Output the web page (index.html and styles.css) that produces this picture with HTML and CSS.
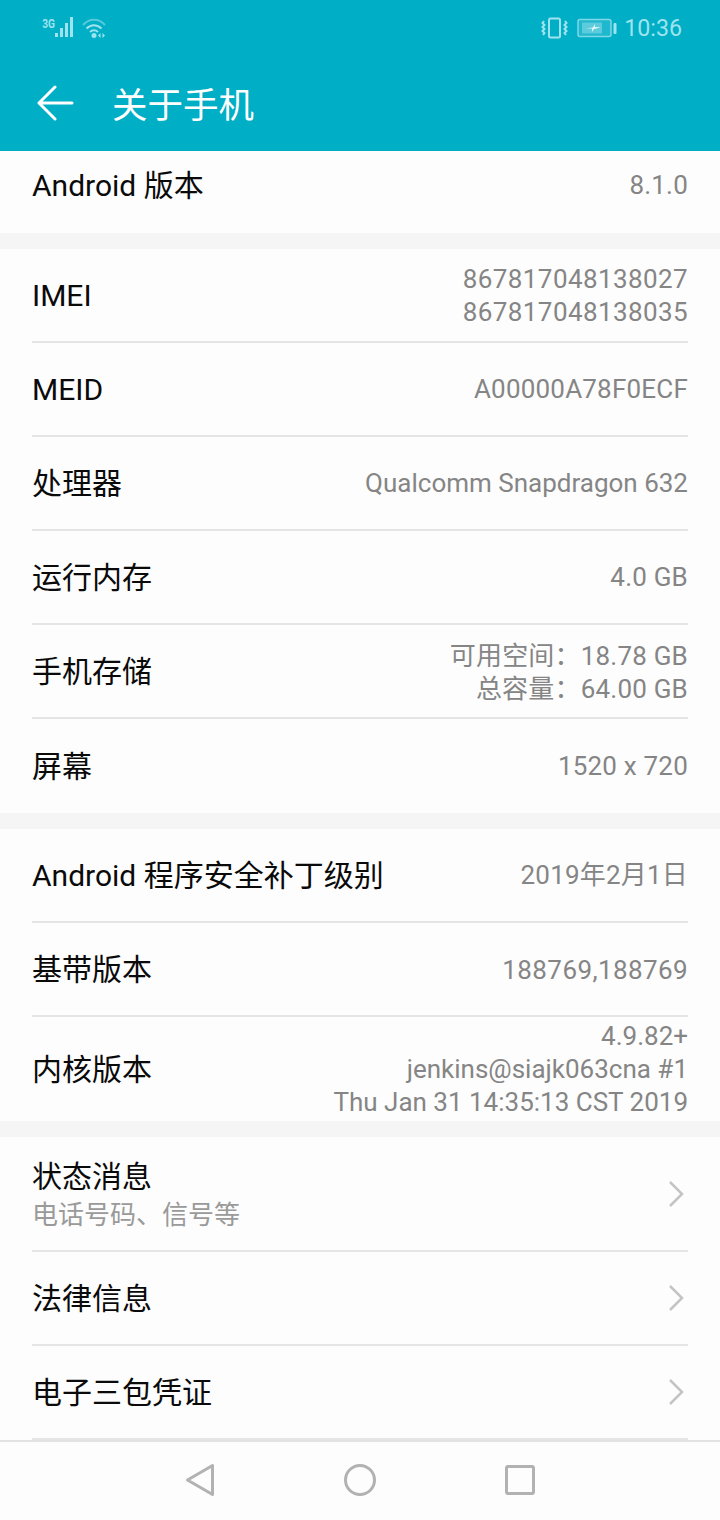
FILE: index.html
```html
<!DOCTYPE html>
<html lang="zh">
<head>
<meta charset="utf-8">
<title>关于手机</title>
<link rel="stylesheet" href="styles.css">
</head>
<body>
<div class="phone">
  <header class="appbar">
    <div class="status">
      <div class="status-left">
        <span class="net">3G</span>
        <svg class="signal" width="22" height="22" viewBox="0 0 22 22"><g fill="#9fe3ee"><rect x="1" y="16" width="3" height="4"/><rect x="6" y="11" width="3" height="9"/><rect x="11" y="6" width="3" height="14"/><rect x="16" y="0" width="3" height="20"/></g></svg>
        <svg class="wifi" width="26" height="22" viewBox="0 0 26 22"><g fill="none" stroke="#9fe3ee" stroke-width="2"><path d="M1 8C7 1 17 1 23 8" opacity=".55"/><path d="M4.500 11.500C9 7 15 7 19.500 11.500"/><path d="M8 15C10.500 12.800 13.500 12.800 16 15"/></g><circle cx="12" cy="18.500" r="2.500" fill="#9fe3ee"/><path d="M18.500 16v5L16 18.500zM20.500 16v5l2.500-2.500z" fill="#9fe3ee"/></svg>
      </div>
      <div class="status-right">
        <svg class="vibrate" width="27" height="22" viewBox="0 0 27 22"><rect x="8" y="1.500" width="11" height="19" rx="1.500" fill="none" stroke="#9fe3ee" stroke-width="2"/><path d="M3 4L1.500 6 3.500 8 1.500 10 3.500 12 1.500 14 3.500 16 2 18M24 4l1.500 2-2 2 2 2-2 2 2 2-2 2 1.500 2" fill="none" stroke="#9fe3ee" stroke-width="2"/></svg>
        <svg class="battery" width="40" height="20" viewBox="0 0 40 20"><rect x="1" y="1.500" width="33" height="17" rx="2" fill="#1fb8ce" stroke="#7fd8e6" stroke-width="1.500"/><rect x="5" y="4.500" width="20" height="11" fill="#5cccdc"/><path d="M9 10.500l7-1 2-3.500 0 3 6 .5-7 1.500-2 3 0-3.500z" fill="#e2f7fa"/><rect x="36.500" y="5" width="3" height="11" rx="1" fill="#9fe3ee"/></svg>
        <span class="clock">10:36</span>
      </div>
    </div>
    <div class="titlebar">
      <svg class="back" width="40" height="36" viewBox="0 0 40 36"><path d="M36 18H3M19 2L3 18l16 16" fill="none" stroke="#fff" stroke-width="3" stroke-linecap="round" stroke-linejoin="round"/></svg>
      <h1>关于手机</h1>
    </div>
  </header>
  <main class="content">
    <section class="group first">
      <div class="row top"><span class="label">Android 版本</span><span class="value">8.1.0</span></div>
    </section>
    <section class="group">
      <div class="row"><span class="label">IMEI</span><span class="value digits two">867817048138027<br>867817048138035</span></div>
      <div class="row"><span class="label">MEID</span><span class="value">A00000A78F0ECF</span></div>
      <div class="row"><span class="label">处理器</span><span class="value plain">Qualcomm Snapdragon 632</span></div>
      <div class="row"><span class="label">运行内存</span><span class="value">4.0 GB</span></div>
      <div class="row"><span class="label">手机存储</span><span class="value store">可用空间：18.78 GB<br>总容量：64.00 GB</span></div>
      <div class="row last"><span class="label">屏幕</span><span class="value">1520 x 720</span></div>
    </section>
    <section class="group">
      <div class="row"><span class="label">Android 程序安全补丁级别</span><span class="value">2019年2月1日</span></div>
      <div class="row"><span class="label">基带版本</span><span class="value digits two">188769,188769</span></div>
      <div class="row last tall"><span class="label">内核版本</span><span class="value plain">4.9.82+<br>jenkins@siajk063cna #1<br>Thu Jan 31 14:35:13 CST 2019</span></div>
    </section>
    <section class="group">
      <div class="row link big"><div class="stack"><span class="label">状态消息</span><span class="sub">电话号码、信号等</span></div><svg class="chev" width="18" height="28" viewBox="0 0 18 28"><path d="M3 2l12 12L3 26" fill="none" stroke="#c4c4c4" stroke-width="2.500"/></svg></div>
      <div class="row link"><span class="label">法律信息</span><svg class="chev" width="18" height="28" viewBox="0 0 18 28"><path d="M3 2l12 12L3 26" fill="none" stroke="#c4c4c4" stroke-width="2.500"/></svg></div>
      <div class="row link"><span class="label">电子三包凭证</span><svg class="chev" width="18" height="28" viewBox="0 0 18 28"><path d="M3 2l12 12L3 26" fill="none" stroke="#c4c4c4" stroke-width="2.500"/></svg></div>
    </section>
  </main>
  <nav class="navbar">
    <svg width="34" height="34" viewBox="0 0 34 34"><path d="M29.500 2.500V31.500L4.500 17z" fill="none" stroke="#b2b2b2" stroke-width="3" stroke-linejoin="round"/></svg>
    <svg width="34" height="34" viewBox="0 0 34 34"><circle cx="17" cy="17" r="14.500" fill="none" stroke="#b2b2b2" stroke-width="3"/></svg>
    <svg width="34" height="34" viewBox="0 0 34 34"><rect x="3.500" y="3.500" width="27" height="27" rx="1.500" fill="none" stroke="#b2b2b2" stroke-width="3"/></svg>
  </nav>
</div>
</body>
</html>
```
FILE: styles.css
```css
* { box-sizing: border-box; }
html, body { margin: 0; padding: 0; }
body { font-family: Roboto, "Noto Sans CJK SC", sans-serif; background: #fff; }
.phone { width: 720px; height: 1520px; display: flex; flex-direction: column; overflow: hidden; }
.appbar { height: 151px; flex: none; background: #00aec6; color: #fff; }
.status { height: 56px; display: flex; justify-content: space-between; align-items: center; padding: 0 38px 0 41px; }
.status-left, .status-right { display: flex; align-items: center; }
.status-left { align-items: flex-end; }
.net { font-size: 12px; font-weight: 700; color: #9fe3ee; align-self: flex-start; line-height: 12px; margin: 1px -2px 0 0; transform: scaleX(.85); }
.signal { margin-right: 6px; }
.status-right { gap: 0; }
.vibrate { margin-right: 9px; }
.battery { margin-right: 7px; }
.clock { font-size: 23.200px; color: #9fe3ee; }
.titlebar { height: 95px; display: flex; align-items: center; padding: 0 0 0 36px; margin-top: -1px; }
.back { margin-right: 36px; }
h1 { margin: 0; font-size: 35.500px; font-weight: 400; color: #fff; }
.content { flex: 1; min-height: 0; overflow: hidden; background: #f5f5f5; display: flex; flex-direction: column; gap: 16px; }
.group { background: #fdfdfd; padding: 0 32px; flex: none; }
.first { height: 82px; }
.row { height: 94px; display: flex; justify-content: space-between; align-items: center; border-bottom: 2px solid #e5e5e5; }
.row.top { height: 68px; border-bottom: 0; }
.row.last { border-bottom: 0; }
.row.tall { height: 104px; }
.row.big { height: 115px; }
.label { font-size: 30px; color: #0a0a0a; line-height: 38px; padding-top: 2px; white-space: nowrap; }
.value { font-size: 26px; line-height: 33px; color: #858585; text-align: right; white-space: nowrap; letter-spacing: .2px; }
.value.plain { letter-spacing: 0; }
.value.digits { letter-spacing: .4px; }
.value.two { padding-top: 2px; }
.value.store { padding-top: 4px; }
.stack { display: flex; flex-direction: column; padding-top: 3px; }
.sub { font-size: 26px; line-height: 38px; color: #9a9a9a; }
.chev { margin-right: 3px; }
.navbar { height: 80px; flex: none; background: #fdfdfd; border-top: 2px solid #e2e2e2; display: flex; justify-content: center; align-items: center; gap: 126px; padding-bottom: 2px; }
```
